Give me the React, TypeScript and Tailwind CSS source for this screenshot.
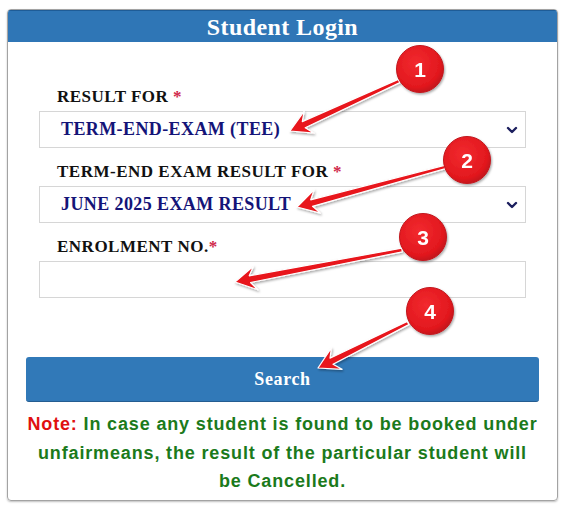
import React from 'react';

type Pt = [number, number];

const markers: { n: string; c: Pt; from: Pt; to: Pt }[] = [
  { n: '1', c: [420, 69], from: [399, 81], to: [290, 131] },
  { n: '2', c: [467, 160], from: [445, 167], to: [297, 207] },
  { n: '3', c: [423, 237], from: [402, 250], to: [235, 282] },
  { n: '4', c: [430, 311], from: [408, 323], to: [318, 368] },
];

function arrowPoints(from: Pt, to: Pt) {
  const [sx, sy] = from;
  const [tx, ty] = to;
  const len = Math.hypot(tx - sx, ty - sy);
  const dx = (tx - sx) / len;
  const dy = (ty - sy) / len;
  const nx = -dy;
  const ny = dx;
  const headLen = 21;
  const headW = 12;
  const neck = 3.4;
  const tail = 1.8;
  const at = (d: number, w: number): string =>
    `${(tx - dx * d + nx * w).toFixed(1)},${(ty - dy * d + ny * w).toFixed(1)}`;
  return [
    `${tx},${ty}`,
    at(headLen, headW),
    at(headLen * 0.72, neck),
    `${(sx + nx * tail).toFixed(1)},${(sy + ny * tail).toFixed(1)}`,
    `${(sx - nx * tail).toFixed(1)},${(sy - ny * tail).toFixed(1)}`,
    at(headLen * 0.72, -neck),
    at(headLen, -headW),
  ].join(' ');
}

function Chevron() {
  return (
    <svg width="12" height="8" viewBox="0 0 12 8" className="shrink-0">
      <path d="M2 2 L6 6 L10 2" fill="none" stroke="#1c1f5e" strokeWidth="2.4" strokeLinecap="round" strokeLinejoin="round" />
    </svg>
  );
}

function Label({ text, gap = true }: { text: string; gap?: boolean }) {
  return (
    <div className="h-[20px] leading-[20px] pl-[18px] text-[17px] font-bold text-[#111] tracking-[0.5px] whitespace-nowrap">
      {text}
      {gap ? ' ' : ''}
      <span className="text-[#d0284a]">*</span>
    </div>
  );
}

function FakeSelect({ value }: { value: string }) {
  return (
    <div className="mt-[4px] h-[37px] border border-[#d6d6d6] flex items-center justify-between pl-[21px] pr-[7px]">
      <span className="text-[18px] font-bold text-[#141478] tracking-[0.4px] whitespace-nowrap">{value}</span>
      <Chevron />
    </div>
  );
}

export default function App() {
  return (
    <div className="relative min-h-screen w-[570px] h-[508px] bg-white pt-[9px] pl-[7px] font-['Liberation_Serif','Times_New_Roman',serif]">
      <div className="w-[551px] h-[492px] border border-[#a3a3a3] rounded-[4px] overflow-hidden shadow-[0_1px_2px_rgba(0,0,0,0.25)] flex flex-col">
        <div className="h-[32px] bg-[#2f76b6] border-t border-[#1e5c97] flex items-center justify-center text-white text-[24px] font-bold tracking-[0.4px]">
          Student Login
        </div>

        <div className="flex-1 px-[18px]">
          <div className="px-[13px] pt-[45px]">
            <Label text="RESULT FOR" />
            <FakeSelect value="TERM-END-EXAM (TEE)" />

            <div className="mt-[14px]">
              <Label text="TERM-END EXAM RESULT FOR" />
              <FakeSelect value="JUNE 2025 EXAM RESULT" />
            </div>

            <div className="mt-[14px]">
              <Label text="ENROLMENT NO." gap={false} />
              <div className="mt-[4px] h-[37px] border border-[#d6d6d6]" />
            </div>
          </div>

          <button className="mt-[59px] w-full h-[45px] rounded-[3px] bg-[#3179b8] border-b border-[#245d91] text-white text-[18px] font-bold tracking-[0.6px]">
            Search
          </button>

          <p className="mt-[8px] -mx-[10px] text-center text-[18px] leading-[28.5px] font-bold text-[#1b7a1b] tracking-[0.85px] whitespace-nowrap font-['Liberation_Sans',Arial,sans-serif]">
            <span className="text-[#e01010]">Note:</span> In case any student is found to be booked under
            <br />
            unfairmeans, the result of the particular student will
            <br />
            be Cancelled.
          </p>
        </div>
      </div>

      <svg className="absolute inset-0 pointer-events-none" width="570" height="508" viewBox="0 0 570 508">
        <defs>
          <radialGradient id="badge" cx="42%" cy="38%" r="68%">
            <stop offset="0%" stopColor="#f22a2f" />
            <stop offset="75%" stopColor="#e2181e" />
            <stop offset="100%" stopColor="#b8121a" />
          </radialGradient>
          <filter id="shade" x="-20%" y="-20%" width="140%" height="140%">
            <feDropShadow dx="1" dy="1.5" stdDeviation="1.2" floodColor="#000" floodOpacity="0.35" />
          </filter>
        </defs>
        {markers.map((m) => (
          <g key={m.n} filter="url(#shade)">
            <polygon points={arrowPoints(m.from, m.to)} fill="#e8141b" stroke="#fff" strokeWidth="1.2" strokeLinejoin="round" />
            <circle cx={m.c[0]} cy={m.c[1]} r="23.5" fill="url(#badge)" stroke="#c2151c" strokeWidth="1" />
            <text
              x={m.c[0]}
              y={m.c[1] + 7.5}
              textAnchor="middle"
              fill="#fff"
              fontSize="21"
              fontWeight="700"
              fontFamily="'Liberation Sans', Arial, sans-serif"
            >
              {m.n}
            </text>
          </g>
        ))}
      </svg>
    </div>
  );
}
